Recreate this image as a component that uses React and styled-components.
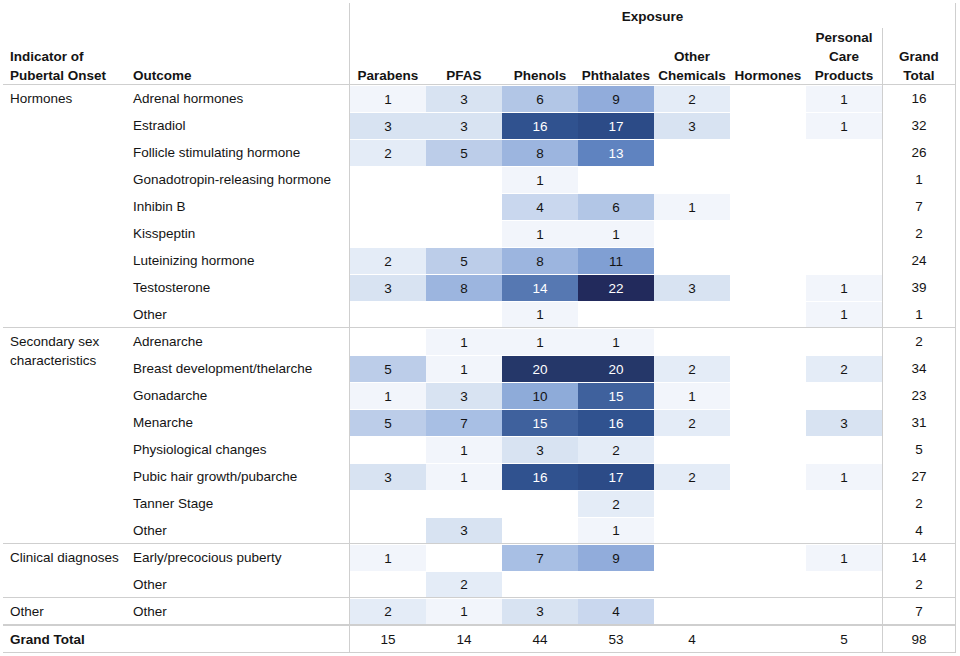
import React from "react";
import styled, { createGlobalStyle } from "styled-components";

const GlobalStyle = createGlobalStyle`
  body {
    margin: 0;
    background: #fff;
    font-family: "Liberation Sans", Arial, sans-serif;
    color: #141414;
  }
`;

const LINE = "#cfcfcf";

const Page = styled.div`
  padding: 3px 0 0 3px;
`;

const Table = styled.div`
  width: 952px;
  border-right: 1px solid ${LINE};
  font-size: 13.5px;
`;

const TitleRow = styled.div`
  display: grid;
  grid-template-columns: 347px 1fr;
  height: 25px;
`;

const Blank = styled.div`
  border-right: 1px solid ${LINE};
`;

const Title = styled.div`
  font-weight: bold;
  text-align: center;
  padding-top: 3px;
  line-height: 22px;
`;

const HeaderRow = styled.div`
  display: grid;
  grid-template-columns: 130px 217px repeat(7, 76px) 73px;
  height: 57px;
  border-bottom: 1px solid ${LINE};
  box-sizing: border-box;
`;

const HeadCell = styled.div`
  display: flex;
  align-items: flex-end;
  justify-content: ${(p) => (p.$left ? "flex-start" : "center")};
  text-align: ${(p) => (p.$left ? "left" : "center")};
  font-weight: bold;
  line-height: 19px;
  padding-left: ${(p) => (p.$first ? "7px" : "0")};
  border-right: ${(p) => (p.$divider ? `1px solid ${LINE}` : "none")};
  border-left: ${(p) => (p.$total ? `1px solid ${LINE}` : "none")};
  white-space: pre-line;
`;

const Group = styled.div`
  display: grid;
  grid-template-columns: 130px 1fr;
  border-bottom: ${(p) => p.$border}px solid ${LINE};
`;

const Indicator = styled.div`
  padding: 4px 0 0 7px;
  line-height: 19px;
  white-space: pre-line;
  font-weight: ${(p) => (p.$bold ? "bold" : "normal")};
`;

const Rows = styled.div`
  display: flex;
  flex-direction: column;
`;

const Row = styled.div`
  display: grid;
  grid-template-columns: 217px repeat(7, 76px) 73px;
  height: 27px;
  &:last-child {
    height: ${(p) => 27 - p.$trim}px;
  }
`;

const Outcome = styled.div`
  display: flex;
  align-items: center;
  border-right: 1px solid ${LINE};
`;

const Cell = styled.div`
  display: flex;
  align-items: center;
  justify-content: center;
  border-top: 1px solid #fff;
  color: ${(p) => (p.$light ? "#fff" : "#141414")};
`;

const TotalCell = styled.div`
  display: flex;
  align-items: center;
  justify-content: center;
  border-left: 1px solid ${LINE};
`;

const stops = [
  [1, [242, 245, 251]],
  [2, [228, 236, 247]],
  [3, [216, 227, 242]],
  [4, [201, 215, 238]],
  [5, [188, 205, 233]],
  [6, [178, 198, 230]],
  [7, [168, 191, 228]],
  [8, [156, 181, 223]],
  [9, [145, 172, 219]],
  [10, [142, 171, 217]],
  [11, [128, 159, 211]],
  [13, [95, 131, 192]],
  [14, [86, 120, 178]],
  [15, [63, 97, 157]],
  [16, [48, 82, 143]],
  [17, [44, 75, 135]],
  [20, [37, 55, 105]],
  [22, [34, 42, 92]],
];

function heat(v) {
  for (let i = 0; i < stops.length - 1; i++) {
    const [a, ca] = stops[i];
    const [b, cb] = stops[i + 1];
    if (v >= a && v <= b) {
      const t = (v - a) / (b - a);
      const c = ca.map((x, k) => Math.round(x + (cb[k] - x) * t));
      return `rgb(${c.join(",")})`;
    }
  }
  return "transparent";
}

const columns = [
  "Parabens",
  "PFAS",
  "Phenols",
  "Phthalates",
  "Other\nChemicals",
  "Hormones",
  "Personal\nCare\nProducts",
];

const groups = [
  {
    name: "Hormones",
    rows: [
      ["Adrenal hormones", [1, 3, 6, 9, 2, null, 1], 16],
      ["Estradiol", [3, 3, 16, 17, 3, null, 1], 32],
      ["Follicle stimulating hormone", [2, 5, 8, 13, null, null, null], 26],
      ["Gonadotropin-releasing hormone", [null, null, 1, null, null, null, null], 1],
      ["Inhibin B", [null, null, 4, 6, 1, null, null], 7],
      ["Kisspeptin", [null, null, 1, 1, null, null, null], 2],
      ["Luteinizing hormone", [2, 5, 8, 11, null, null, null], 24],
      ["Testosterone", [3, 8, 14, 22, 3, null, 1], 39],
      ["Other", [null, null, 1, null, null, null, 1], 1],
    ],
  },
  {
    name: "Secondary sex\ncharacteristics",
    rows: [
      ["Adrenarche", [null, 1, 1, 1, null, null, null], 2],
      ["Breast development/thelarche", [5, 1, 20, 20, 2, null, 2], 34],
      ["Gonadarche", [1, 3, 10, 15, 1, null, null], 23],
      ["Menarche", [5, 7, 15, 16, 2, null, 3], 31],
      ["Physiological changes", [null, 1, 3, 2, null, null, null], 5],
      ["Pubic hair growth/pubarche", [3, 1, 16, 17, 2, null, 1], 27],
      ["Tanner Stage", [null, null, null, 2, null, null, null], 2],
      ["Other", [null, 3, null, 1, null, null, null], 4],
    ],
  },
  {
    name: "Clinical diagnoses",
    rows: [
      ["Early/precocious puberty", [1, null, 7, 9, null, null, 1], 14],
      ["Other", [null, 2, null, null, null, null, null], 2],
    ],
  },
  {
    name: "Other",
    rows: [["Other", [2, 1, 3, 4, null, null, null], 7]],
  },
];

const grandTotals = [15, 14, 44, 53, 4, null, 5];

export default function App() {
  return (
    <Page>
      <GlobalStyle />
      <Table>
        <TitleRow>
          <Blank />
          <Title>Exposure</Title>
        </TitleRow>
        <HeaderRow>
          <HeadCell $left $first>
            {"Indicator of\nPubertal Onset"}
          </HeadCell>
          <HeadCell $left $divider>
            Outcome
          </HeadCell>
          {columns.map((c) => (
            <HeadCell key={c}>{c}</HeadCell>
          ))}
          <HeadCell $total>{"Grand\nTotal"}</HeadCell>
        </HeaderRow>

        {groups.map((g, gi) => {
          const last = gi === groups.length - 1;
          return (
            <Group key={g.name} $border={last ? 2 : 1}>
              <Indicator>{g.name}</Indicator>
              <Rows>
                {g.rows.map(([label, values, total], ri) => (
                  <Row key={ri} $trim={1}>
                    <Outcome>{label}</Outcome>
                    {values.map((v, i) => (
                      <Cell
                        key={i}
                        $light={v >= 13}
                        style={{ background: v ? heat(v) : "transparent" }}
                      >
                        {v}
                      </Cell>
                    ))}
                    <TotalCell>{total}</TotalCell>
                  </Row>
                ))}
              </Rows>
            </Group>
          );
        })}

        <Group $border={1}>
          <Indicator $bold>Grand Total</Indicator>
          <Rows>
            <Row $trim={1}>
              <Outcome />
              {grandTotals.map((v, i) => (
                <Cell key={i}>{v}</Cell>
              ))}
              <TotalCell>98</TotalCell>
            </Row>
          </Rows>
        </Group>
      </Table>
    </Page>
  );
}
